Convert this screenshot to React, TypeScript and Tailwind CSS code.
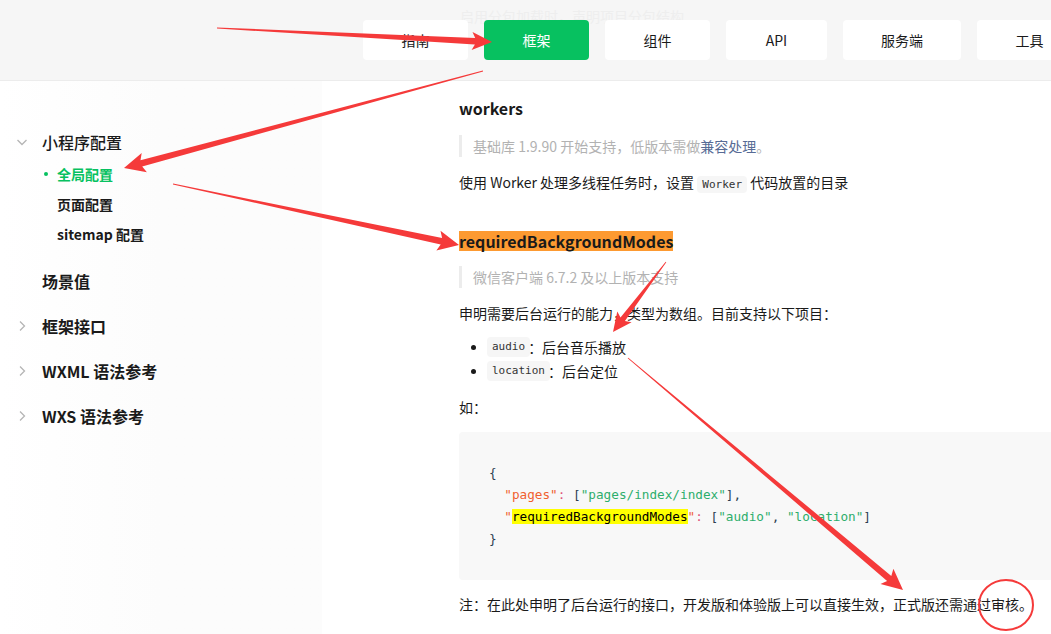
import React from "react";

type Pt = [number, number];

// tapered arrow like a screenshot annotation tool draws
function arrowPoints(tail: Pt, tip: Pt, w0: number, w1: number, L: number, H: number) {
  const dx = tip[0] - tail[0];
  const dy = tip[1] - tail[1];
  const len = Math.hypot(dx, dy);
  const ux = dx / len;
  const uy = dy / len;
  const nx = -uy;
  const ny = ux;
  const bx = tip[0] - ux * L;
  const by = tip[1] - uy * L;
  const pts: Pt[] = [
    [tail[0] + (nx * w0) / 2, tail[1] + (ny * w0) / 2],
    [bx + (nx * w1) / 2, by + (ny * w1) / 2],
    [bx - ux * 3 + nx * H, by - uy * 3 + ny * H],
    tip,
    [bx - ux * 3 - nx * H, by - uy * 3 - ny * H],
    [bx - (nx * w1) / 2, by - (ny * w1) / 2],
    [tail[0] - (nx * w0) / 2, tail[1] - (ny * w0) / 2],
  ];
  return pts.map((p) => `${p[0].toFixed(1)},${p[1].toFixed(1)}`).join(" ");
}

const arrows: { tail: Pt; tip: Pt; w0: number; w1: number; L: number; H: number }[] = [
  { tail: [217, 28], tip: [492, 42], w0: 1, w1: 6.5, L: 17, H: 9 },
  { tail: [483, 71], tip: [124, 168], w0: 0.8, w1: 6.5, L: 18, H: 10 },
  { tail: [173, 184], tip: [459, 245], w0: 0.8, w1: 6.5, L: 18, H: 10 },
  { tail: [666, 262], tip: [613, 332], w0: 0.8, w1: 5.5, L: 16, H: 9 },
  { tail: [628, 358], tip: [903, 590], w0: 0.8, w1: 6.5, L: 18, H: 10 },
];

function Chevron({ down }: { down?: boolean }) {
  return (
    <svg width="12" height="12" viewBox="0 0 12 12" fill="none" stroke="#b5b5b5" strokeWidth="1.3">
      {down ? <path d="M1.5 4l4.5 4.5L10.5 4" /> : <path d="M4 1.5l4.5 4.5L4 10.5" />}
    </svg>
  );
}

const navItems = [
  { label: "指南", w: "w-[105px]" },
  { label: "框架", w: "w-[105px]", active: true },
  { label: "组件", w: "w-[105px]" },
  { label: "API", w: "w-[101px]" },
  { label: "服务端", w: "w-[118px]" },
  { label: "工具", w: "w-[105px]" },
];

export default function App() {
  return (
    <div className="relative w-[1051px] h-[634px] overflow-hidden bg-white font-['Noto_Sans_CJK_SC',sans-serif] text-[#1a1a1a]">
      {/* top nav */}
      <header className="relative h-[81px] bg-[#f6f6f6] border-b border-[#ececec] flex items-center pl-[363px] gap-4 overflow-hidden">
        <span className="absolute left-[460px] top-[6px] text-[14px] text-[#eeeeee] whitespace-nowrap">
          启用分包加载时，声明项目分包结构
        </span>
        {navItems.map((n) => (
          <div
            key={n.label}
            className={`relative shrink-0 h-10 ${n.w} rounded flex items-center justify-center text-[14px] ${
              n.active ? "bg-[#07c160] text-white" : "bg-white text-[#1a1a1a]"
            }`}
          >
            {n.label}
          </div>
        ))}
      </header>

      <div className="flex">
        {/* sidebar */}
        <aside className="w-[322px] shrink-0 h-[553px] bg-gradient-to-r from-white via-[#fcfcfc] to-[#fcfcfc] pt-[49px]">
          <div className="flex flex-col gap-[21px]">
            <div className="-mb-[1px]">
              <div className="flex items-center h-6">
                <span className="w-[42px] pl-[16px] flex">
                  <Chevron down />
                </span>
                <span className="text-[16px] font-medium">小程序配置</span>
              </div>
              <div className="mt-[5px] flex flex-col text-[14px] font-bold">
                <div className="h-[30px] flex items-center text-[#07c160]">
                  <span className="w-[57px] flex pl-[44px]">
                    <span className="w-1 h-1 rounded-full bg-[#07c160]" />
                  </span>
                  全局配置
                </div>
                <div className="h-[30px] flex items-center pl-[57px]">页面配置</div>
                <div className="h-[30px] flex items-center pl-[57px]">sitemap 配置</div>
              </div>
            </div>
            <div className="flex items-center h-6">
              <span className="w-[42px]" />
              <span className="text-[16px] font-bold">场景值</span>
            </div>
            {["框架接口", "WXML 语法参考", "WXS 语法参考"].map((t) => (
              <div key={t} className="flex items-center h-6">
                <span className="w-[42px] pl-[16px] flex">
                  <Chevron />
                </span>
                <span className="text-[16px] font-bold">{t}</span>
              </div>
            ))}
          </div>
        </aside>

        {/* content */}
        <main className="flex-1 pl-[137px] pt-[15px] text-[14px] leading-[22px] whitespace-nowrap">
          <h3 className="text-[16px] leading-6 font-bold">workers</h3>
          <blockquote className="mt-[15px] border-l-[3px] border-[#ececec] pl-[11px] text-[#b2b2b2]">
            基础库 1.9.90 开始支持，低版本需做<span className="text-[#576b95]">兼容处理</span>。
          </blockquote>
          <p className="mt-[14px]">
            使用 Worker 处理多线程任务时，设置{" "}
            <code className="bg-[#f6f6f6] px-[5px] py-[2px] rounded-sm font-['DejaVu_Sans_Mono',monospace] text-[11px] text-[#333]">
              Worker
            </code>{" "}
            代码放置的目录
          </p>

          <h3 className="mt-[35px] h-5 text-[16px] leading-5 font-bold">
            <span className="inline-block h-5 bg-[#fd9a31]">requiredBackgroundModes</span>
          </h3>
          <blockquote className="mt-[15px] border-l-[3px] border-[#ececec] pl-[11px] text-[#b2b2b2]">
            微信客户端 6.7.2 及以上版本支持
          </blockquote>
          <p className="mt-[14px]">申明需要后台运行的能力，类型为数组。目前支持以下项目：</p>
          <ul className="mt-[11px]">
            {[
              ["audio", "：后台音乐播放"],
              ["location", "：后台定位"],
            ].map(([c, t]) => (
              <li key={c} className="flex items-center h-6">
                <span className="w-[28px] flex pl-[12px]">
                  <span className="w-[5px] h-[5px] rounded-full bg-[#1a1a1a]" />
                </span>
                <code className="bg-[#f6f6f6] px-[5px] h-5 leading-5 rounded-sm font-['DejaVu_Sans_Mono',monospace] text-[11px] text-[#333]">
                  {c}
                </code>
                <span className="-ml-[2px]">{t}</span>
              </li>
            ))}
          </ul>
          <p className="mt-[13px]">如：</p>

          <pre className="mt-[14px] -mr-10 h-[148px] bg-[#f8f8f8] rounded pl-[30px] pt-[30px] font-['DejaVu_Sans_Mono',monospace] text-[12.7px] leading-[22px] text-[#2c3e50]">
            <div>{"{"}</div>
            <div>
              {"  "}
              <span className="text-[#f0602f]">"pages"</span>
              <span className="text-[#e0557a]">: </span>[<span className="text-[#2eae6c]">"pages/index/index"</span>],
            </div>
            <div>
              {"  "}
              <span className="text-[#f0602f]">
                "<span className="bg-[#ffff00] text-black">requiredBackgroundModes</span>"
              </span>
              <span className="text-[#e0557a]">: </span>[<span className="text-[#2eae6c]">"audio"</span>,{" "}
              <span className="text-[#2eae6c]">"location"</span>]
            </div>
            <div>{"}"}</div>
          </pre>

          <p className="mt-[13px]">注：在此处申明了后台运行的接口，开发版和体验版上可以直接生效，正式版还需通过审核。</p>
        </main>
      </div>

      {/* annotations drawn on top of the screenshot */}
      <svg className="absolute inset-0 pointer-events-none" width="1051" height="634" viewBox="0 0 1051 634">
        {arrows.map((a, i) => (
          <polygon key={i} points={arrowPoints(a.tail, a.tip, a.w0, a.w1, a.L, a.H)} fill="#f53a3a" />
        ))}
        <ellipse cx="1006" cy="605" rx="27" ry="25" fill="none" stroke="#f53a3a" strokeWidth="2" />
      </svg>
    </div>
  );
}
